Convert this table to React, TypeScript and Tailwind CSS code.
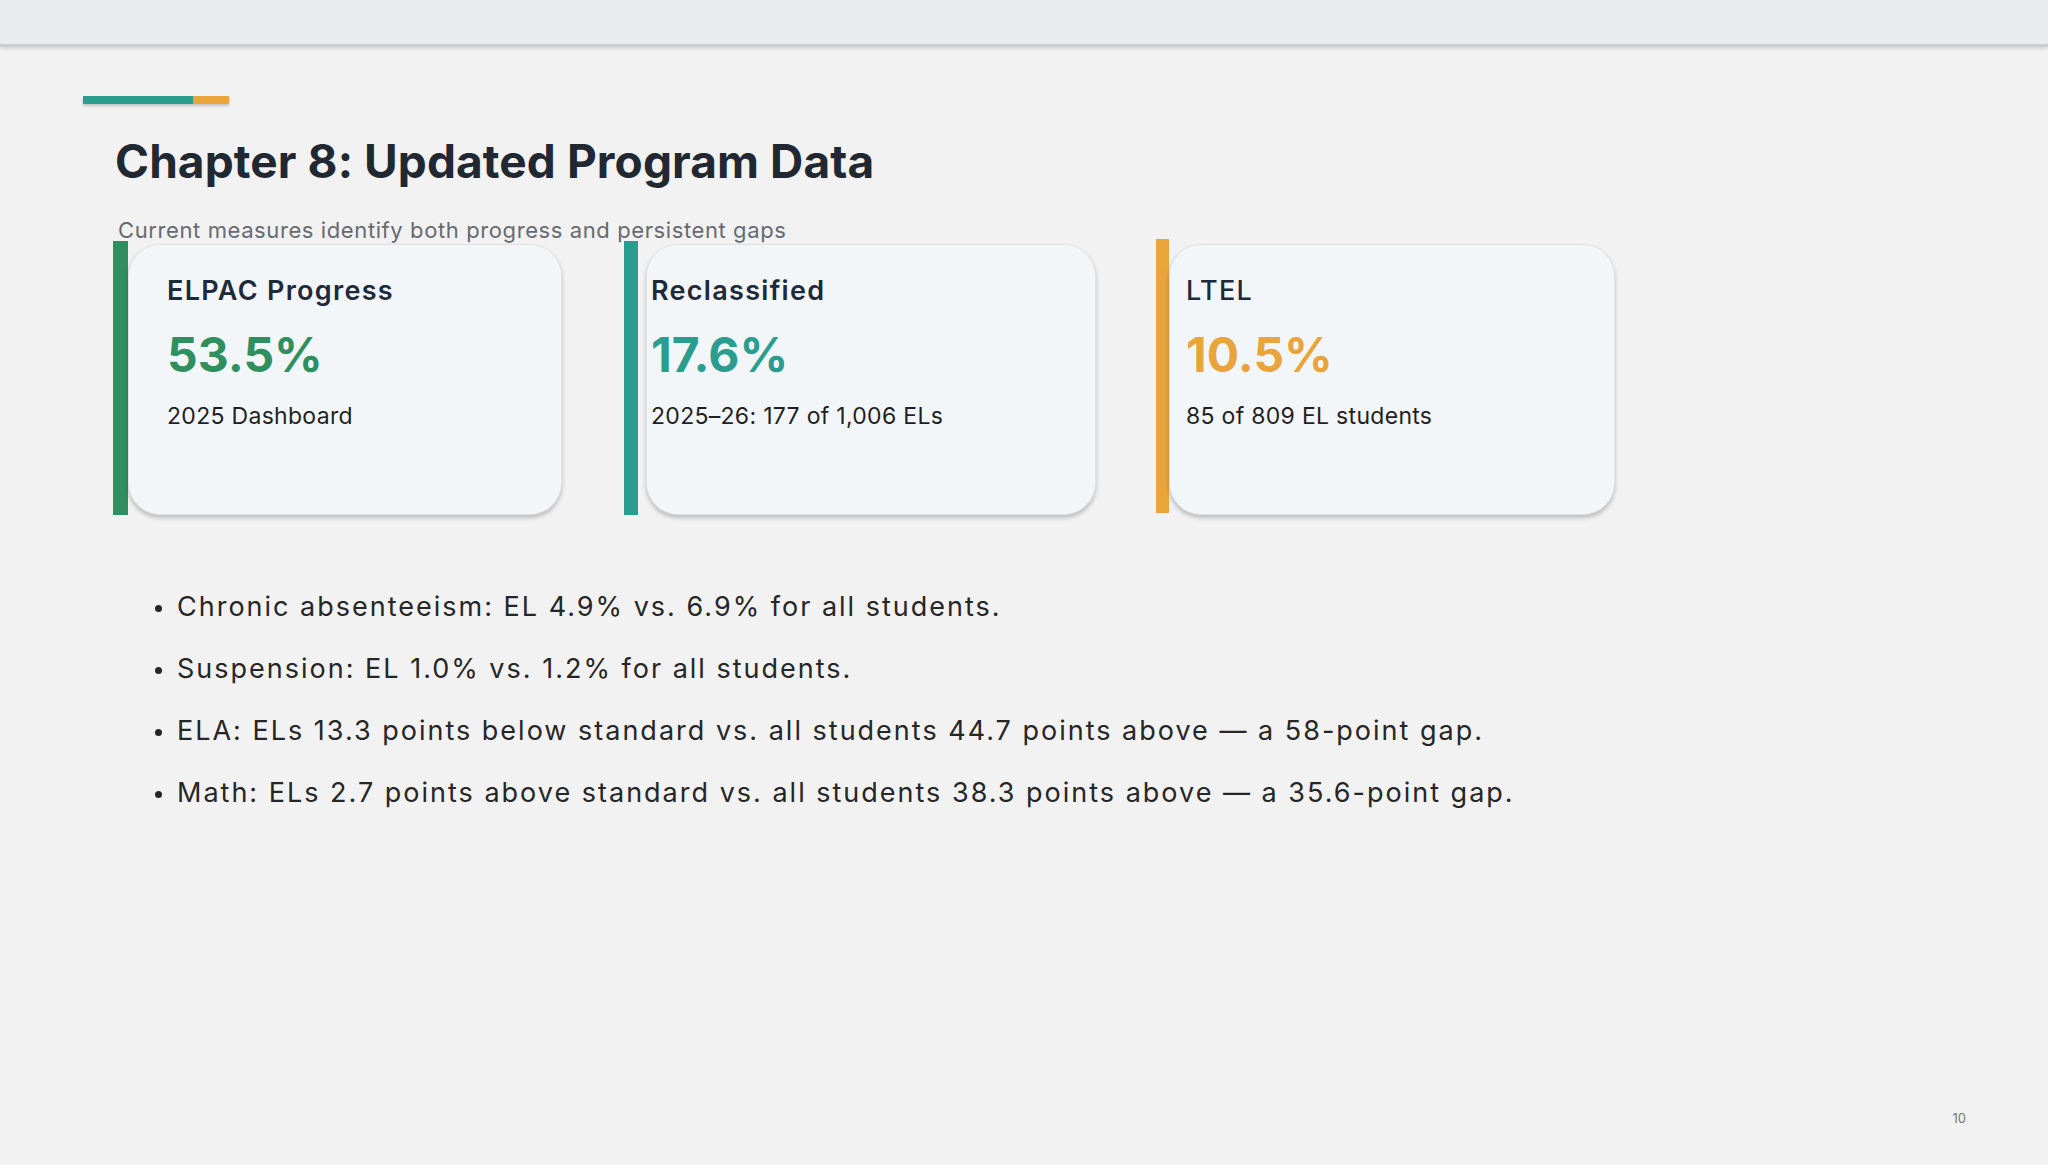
import React from "react";

const bullets = [
  "Chronic absenteeism: EL 4.9% vs. 6.9% for all students.",
  "Suspension: EL 1.0% vs. 1.2% for all students.",
  "ELA: ELs 13.3 points below standard vs. all students 44.7 points above — a 58-point gap.",
  "Math: ELs 2.7 points above standard vs. all students 38.3 points above — a 35.6-point gap.",
];

const App = () => {
  return (
    <div
      className="w-full h-[1165px] bg-[#f2f2f2] flex flex-col overflow-hidden"
      style={{ fontFamily: "Inter, 'Liberation Sans', sans-serif" }}
    >
      {/* Header strip */}
      <div className="h-[47px] bg-[#e9ecef] border-b-[3px] border-[#c9ccd1] shadow-[0_2px_3px_rgba(0,0,0,0.12)]" />

      <div className="flex flex-col">
        {/* Accent bar */}
        <div className="ml-[83px] mt-[49px] flex h-[8px] w-[146px] shadow-[0_2px_3px_rgba(0,0,0,0.2)]">
          <div className="w-[110px] bg-[#2a9d8f]" />
          <div className="w-[36px] bg-[#e9a53c]" />
        </div>

        <h1 className="ml-[115px] mt-[34px] text-[46px] leading-[46px] font-bold text-[#222831] tracking-[0.1px]">
          Chapter 8: Updated Program Data
        </h1>
        <p className="ml-[118px] mt-[35px] text-[22px] leading-[22px] text-[#666a70] tracking-[0.6px]">
          Current measures identify both progress and persistent gaps
        </p>

        {/* Stat cards */}
        <div className="flex items-start pl-[113px]">
          <div className="flex items-start">
            <div className="w-[15px] h-[274px] bg-[#2f8f5f]" />
            <div className="w-[434px] h-[271px] mt-[3px] rounded-[32px] bg-[#f3f6f9] border border-[#dfe3e8] shadow-[0_3px_4px_rgba(0,0,0,0.22)] pl-[38px] pt-[32px]">
              <div className="text-[27px] leading-[27px] font-semibold text-[#1d2a3a] tracking-[1.3px]">ELPAC Progress</div>
              <div className="mt-[27px] text-[48px] leading-[48px] font-bold text-[#2f8f5f]">53.5%</div>
              <div className="mt-[26px] text-[23px] leading-[23px] text-[#1f1f1f] tracking-[0.3px]">2025 Dashboard</div>
            </div>
          </div>

          <div className="flex items-start ml-[62px] gap-[8px]">
            <div className="w-[14px] h-[274px] bg-[#2a9d8f]" />
            <div className="w-[450px] h-[271px] mt-[3px] rounded-[32px] bg-[#f3f6f9] border border-[#dfe3e8] shadow-[0_3px_4px_rgba(0,0,0,0.22)] pl-[4px] pt-[32px]">
              <div className="text-[27px] leading-[27px] font-semibold text-[#1d2a3a] tracking-[1.3px]">Reclassified</div>
              <div className="mt-[27px] text-[48px] leading-[48px] font-bold text-[#2a9d8f]">17.6%</div>
              <div className="mt-[26px] text-[23px] leading-[23px] text-[#1f1f1f] tracking-[0.3px]">2025–26: 177 of 1,006 ELs</div>
            </div>
          </div>

          <div className="flex items-start ml-[60px]">
            <div className="w-[13px] h-[274px] -mt-[2px] bg-[#e9a53c]" />
            <div className="w-[446px] h-[271px] mt-[3px] rounded-[32px] bg-[#f3f6f9] border border-[#dfe3e8] shadow-[0_3px_4px_rgba(0,0,0,0.22)] pl-[16px] pt-[32px]">
              <div className="text-[27px] leading-[27px] font-medium text-[#1d2a3a] tracking-[1.3px]">LTEL</div>
              <div className="mt-[27px] text-[48px] leading-[48px] font-bold text-[#e9a53c]">10.5%</div>
              <div className="mt-[26px] text-[23px] leading-[23px] text-[#1f1f1f] tracking-[0.3px]">85 of 809 EL students</div>
            </div>
          </div>
        </div>

        {/* Bullets */}
        <ul className="mt-[61px] ml-[155px] flex flex-col">
          {bullets.map((b) => (
            <li key={b} className="flex items-center h-[62px] text-[27px] text-[#262626] tracking-[2px]">
              <span className="w-[7px] h-[7px] rounded-full bg-[#262626] mr-[15px] mt-[2px]" />
              {b}
            </li>
          ))}
        </ul>
      </div>

      <div className="flex-1" />
      <div className="flex justify-end pr-[82px] pb-[40px]">
        <span className="text-[13px] leading-[13px] text-[#777]">10</span>
      </div>
    </div>
  );
};

export default App;
